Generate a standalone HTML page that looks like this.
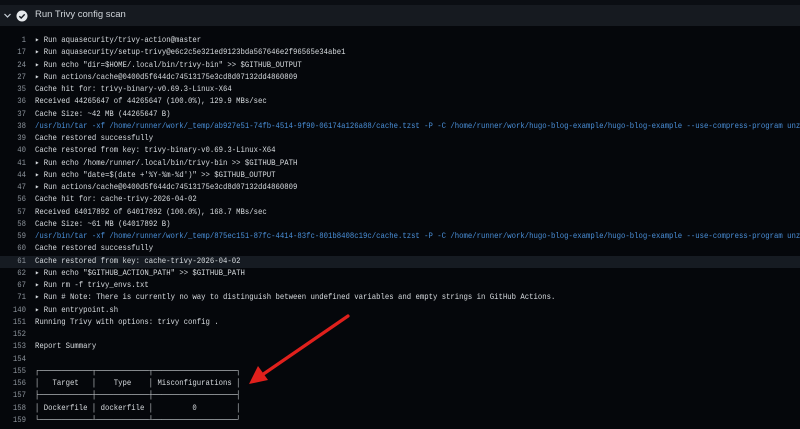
<!DOCTYPE html>
<html><head><meta charset="utf-8"><style>
html,body{margin:0;padding:0;width:800px;height:429px;overflow:hidden;background:#05070b;}
.top{position:absolute;left:0;top:0;width:800px;height:5px;background:#0b0e13;}
.hdr{position:absolute;left:0;top:5px;width:800px;height:21px;background:#161a20;}
.hdr .t{position:absolute;left:35px;top:4px;font:9.5px "Liberation Sans",sans-serif;color:#d0d5da;}
.log{position:absolute;left:0;top:35px;width:800px;font:8.2px/12.26px "Liberation Mono",monospace;color:#d6dade;}
.l{position:relative;height:12.26px;overflow:hidden;}
.n{position:absolute;left:0;width:26px;text-align:right;color:#8b929a;white-space:pre;transform:scaleX(0.89);transform-origin:right center;}
.c{position:absolute;left:35px;white-space:pre;transform:scaleX(0.89);transform-origin:left center;}
.b{color:#4a8fd8;}
.hl{background:#161b22;}
</style></head><body>
<div class="top"></div>
<div class="hdr">
<svg style="position:absolute;left:3px;top:6px" width="9" height="9" viewBox="0 0 9 9"><path d="M1.5 3 L4.5 6 L7.5 3" stroke="#c9d1d9" stroke-width="1.2" fill="none"/></svg>
<svg style="position:absolute;left:16px;top:4.5px" width="12" height="12" viewBox="0 0 12 12"><circle cx="6" cy="6" r="5.5" fill="#e6e9ec"/><path d="M3.3 6.2 L5.2 8 L8.7 4.3" stroke="#161a20" stroke-width="1.4" fill="none"/></svg>
<div class="t">Run Trivy config scan</div>
</div>
<div class="log"><div class="l"><span class="n">1</span><span class="c">▸ Run aquasecurity/trivy-action@master</span></div><div class="l"><span class="n">17</span><span class="c">▸ Run aquasecurity/setup-trivy@e6c2c5e321ed9123bda567646e2f96565e34abe1</span></div><div class="l"><span class="n">24</span><span class="c">▸ Run echo "dir=$HOME/.local/bin/trivy-bin" >> $GITHUB_OUTPUT</span></div><div class="l"><span class="n">27</span><span class="c">▸ Run actions/cache@0400d5f644dc74513175e3cd8d07132dd4860809</span></div><div class="l"><span class="n">35</span><span class="c">Cache hit for: trivy-binary-v0.69.3-Linux-X64</span></div><div class="l"><span class="n">36</span><span class="c">Received 44265647 of 44265647 (100.0%), 129.9 MBs/sec</span></div><div class="l"><span class="n">37</span><span class="c">Cache Size: ~42 MB (44265647 B)</span></div><div class="l"><span class="n">38</span><span class="c b">/usr/bin/tar -xf /home/runner/work/_temp/ab927e51-74fb-4514-9f90-06174a126a88/cache.tzst -P -C /home/runner/work/hugo-blog-example/hugo-blog-example --use-compress-program unzstd</span></div><div class="l"><span class="n">39</span><span class="c">Cache restored successfully</span></div><div class="l"><span class="n">40</span><span class="c">Cache restored from key: trivy-binary-v0.69.3-Linux-X64</span></div><div class="l"><span class="n">41</span><span class="c">▸ Run echo /home/runner/.local/bin/trivy-bin >> $GITHUB_PATH</span></div><div class="l"><span class="n">44</span><span class="c">▸ Run echo "date=$(date +'%Y-%m-%d')" >> $GITHUB_OUTPUT</span></div><div class="l"><span class="n">47</span><span class="c">▸ Run actions/cache@0400d5f644dc74513175e3cd8d07132dd4860809</span></div><div class="l"><span class="n">56</span><span class="c">Cache hit for: cache-trivy-2026-04-02</span></div><div class="l"><span class="n">57</span><span class="c">Received 64017892 of 64017892 (100.0%), 168.7 MBs/sec</span></div><div class="l"><span class="n">58</span><span class="c">Cache Size: ~61 MB (64017892 B)</span></div><div class="l"><span class="n">59</span><span class="c b">/usr/bin/tar -xf /home/runner/work/_temp/875ec151-87fc-4414-83fc-801b8408c19c/cache.tzst -P -C /home/runner/work/hugo-blog-example/hugo-blog-example --use-compress-program unzstd</span></div><div class="l"><span class="n">60</span><span class="c">Cache restored successfully</span></div><div class="l hl"><span class="n">61</span><span class="c">Cache restored from key: cache-trivy-2026-04-02</span></div><div class="l"><span class="n">62</span><span class="c">▸ Run echo "$GITHUB_ACTION_PATH" >> $GITHUB_PATH</span></div><div class="l"><span class="n">67</span><span class="c">▸ Run rm -f trivy_envs.txt</span></div><div class="l"><span class="n">71</span><span class="c">▸ Run # Note: There is currently no way to distinguish between undefined variables and empty strings in GitHub Actions.</span></div><div class="l"><span class="n">140</span><span class="c">▸ Run entrypoint.sh</span></div><div class="l"><span class="n">151</span><span class="c">Running Trivy with options: trivy config .</span></div><div class="l"><span class="n">152</span><span class="c"></span></div><div class="l"><span class="n">153</span><span class="c">Report Summary</span></div><div class="l"><span class="n">154</span><span class="c"></span></div><div class="l"><span class="n">155</span><span class="c">┌────────────┬────────────┬───────────────────┐</span></div><div class="l"><span class="n">156</span><span class="c">│   Target   │    Type    │ Misconfigurations │</span></div><div class="l"><span class="n">157</span><span class="c">├────────────┼────────────┼───────────────────┤</span></div><div class="l"><span class="n">158</span><span class="c">│ Dockerfile │ dockerfile │         0         │</span></div><div class="l"><span class="n">159</span><span class="c">└────────────┴────────────┴───────────────────┘</span></div></div>
<svg style="position:absolute;left:0;top:0" width="800" height="429"><line x1="348" y1="316" x2="262" y2="375" stroke="#e0201c" stroke-width="3.2" stroke-linecap="round"/><polygon points="249,384 258,366 268,380" fill="#e0201c"/></svg>
</body></html>
